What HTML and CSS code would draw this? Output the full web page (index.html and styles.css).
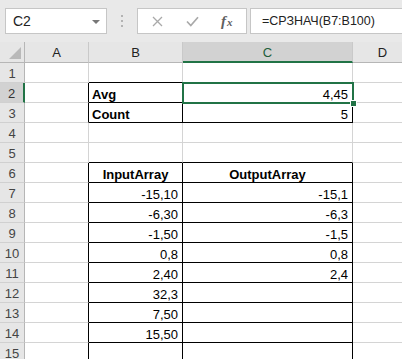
FILE: index.html
```html
<!DOCTYPE html>
<html>
<head>
<meta charset="utf-8">
<link rel="stylesheet" href="styles.css">
</head>
<body>
<div class="app">
  <div class="toolbar">
    <div class="namebox"><span class="nb-text">C2</span><span class="caret"></span></div>
    <div class="dots"><i></i><i></i><i></i></div>
    <div class="fxbox">
      <svg class="ic-x" width="11" height="11" viewBox="0 0 11 11"><path d="M1 1L10 10M10 1L1 10" stroke="#a9a9a9" stroke-width="1.3" fill="none"/></svg>
      <svg class="ic-ok" width="13" height="11" viewBox="0 0 13 11"><path d="M1 5.5L4.8 9.5L12 1.2" stroke="#a9a9a9" stroke-width="1.7" fill="none"/></svg>
      <span class="fx"><span class="fx-f">f</span><span class="fx-x">x</span></span>
    </div>
    <div class="formula">=СРЗНАЧ(B7:B100)</div>
  </div>
  <div class="sheet">
    <div class="c hd corner"><span class="tri"></span></div>
    <div class="c hd col">A</div>
    <div class="c hd col">B</div>
    <div class="c hd col selcol">C</div>
    <div class="c hd col">D</div>

    <div class="c hd rh">1</div><div class="c"></div><div class="c bb"></div><div class="c bb"></div><div class="c"></div>
    <div class="c hd rh selrow">2</div><div class="c br"></div><div class="c br bb b">Avg</div><div class="c br bb num sel">4,45</div><div class="c"></div>
    <div class="c hd rh">3</div><div class="c br"></div><div class="c br bb b">Count</div><div class="c br bb num">5</div><div class="c"></div>
    <div class="c hd rh">4</div><div class="c"></div><div class="c"></div><div class="c"></div><div class="c"></div>
    <div class="c hd rh">5</div><div class="c"></div><div class="c bb"></div><div class="c bb"></div><div class="c"></div>
    <div class="c hd rh">6</div><div class="c br"></div><div class="c br bb b ctr">InputArray</div><div class="c br bb b ctr">OutputArray</div><div class="c"></div>
    <div class="c hd rh">7</div><div class="c br"></div><div class="c br bb num">-15,10</div><div class="c br bb num">-15,1</div><div class="c"></div>
    <div class="c hd rh">8</div><div class="c br"></div><div class="c br bb num">-6,30</div><div class="c br bb num">-6,3</div><div class="c"></div>
    <div class="c hd rh">9</div><div class="c br"></div><div class="c br bb num">-1,50</div><div class="c br bb num">-1,5</div><div class="c"></div>
    <div class="c hd rh">10</div><div class="c br"></div><div class="c br bb num">0,8</div><div class="c br bb num">0,8</div><div class="c"></div>
    <div class="c hd rh">11</div><div class="c br"></div><div class="c br bb num">2,40</div><div class="c br bb num">2,4</div><div class="c"></div>
    <div class="c hd rh">12</div><div class="c br"></div><div class="c br bb num">32,3</div><div class="c br bb num"></div><div class="c"></div>
    <div class="c hd rh">13</div><div class="c br"></div><div class="c br bb num">7,50</div><div class="c br bb num"></div><div class="c"></div>
    <div class="c hd rh">14</div><div class="c br"></div><div class="c br bb num">15,50</div><div class="c br bb num"></div><div class="c"></div>
    <div class="c hd rh">15</div><div class="c br"></div><div class="c br bb num"></div><div class="c br bb num"></div><div class="c"></div>
  </div>
</div>
</body>
</html>
```
FILE: styles.css
```css
html, body {
  margin: 0;
  padding: 0;
  background: #ffffff;
}
.app {
  width: 402px;
  height: 359px;
  overflow: hidden;
  font-family: "Liberation Sans", Arial, sans-serif;
}
.toolbar {
  height: 42px;
  box-sizing: border-box;
  background: #e9e9e9;
  display: flex;
  align-items: flex-start;
  padding-top: 8px;
  padding-left: 5px;
  overflow: hidden;
}
.toolbar > * {
  flex: none;
}
.namebox {
  width: 102px;
  height: 26px;
  box-sizing: border-box;
  border: 1px solid #c6c6c6;
  background: #ffffff;
  display: flex;
  align-items: center;
  justify-content: space-between;
  padding: 0 6px 0 7px;
  font-size: 14px;
  color: #222222;
}
.caret {
  width: 0;
  height: 0;
  border-left: 4px solid transparent;
  border-right: 4px solid transparent;
  border-top: 4px solid #777777;
  margin-top: 1px;
}
.dots {
  margin-left: 14px;
  height: 26px;
  display: flex;
  flex-direction: column;
  justify-content: center;
  gap: 3px;
}
.dots i {
  display: block;
  width: 2px;
  height: 2px;
  background: #b3b3b3;
}
.fxbox {
  margin-left: 14px;
  width: 110px;
  height: 26px;
  box-sizing: border-box;
  border: 1px solid #c6c6c6;
  background: #ffffff;
  display: flex;
  align-items: center;
  padding-left: 14px;
}
.ic-ok {
  margin-left: 23px;
}
.fx {
  margin-left: 22px;
  font-family: "Liberation Serif", "Times New Roman", serif;
  font-style: italic;
  color: #606060;
  display: flex;
  align-items: baseline;
}
.fx-f {
  font-size: 15px;
  font-weight: bold;
}
.fx-x {
  font-size: 11px;
  font-weight: bold;
  margin-left: 1px;
}
.formula {
  margin-left: 3px;
  width: 200px;
  height: 26px;
  box-sizing: border-box;
  border: 1px solid #c6c6c6;
  background: #ffffff;
  display: flex;
  align-items: center;
  padding-left: 11px;
  font-size: 12.5px;
  color: #222222;
}
.sheet {
  display: grid;
  grid-template-columns: 25px 64px 94px 170px 60px;
  grid-template-rows: 21px;
  grid-auto-rows: 20px;
}
.c {
  box-sizing: border-box;
  border-right: 1px solid #d4d4d4;
  border-bottom: 1px solid #d4d4d4;
  display: flex;
  align-items: flex-end;
  padding: 0 3px;
  font-size: 13px;
  line-height: 15px;
  color: #000000;
  white-space: nowrap;
  overflow: visible;
}
.hd {
  background: #e6e6e6;
  color: #444444;
  justify-content: center;
  align-items: center;
  padding: 1px 0 0 0;
  font-size: 13px;
  border-right-color: #c9c9c9;
  border-bottom-color: #c9c9c9;
}
.col {
  border-bottom-color: #b6b6b6;
  color: #222222;
}
.rh {
  border-right-color: #b6b6b6;
  border-bottom-color: #d0d0d0;
}
.corner {
  position: relative;
  border-right-color: #b6b6b6;
  border-bottom-color: #b6b6b6;
}
.tri {
  position: absolute;
  right: 3px;
  bottom: 3px;
  width: 0;
  height: 0;
  border-left: 12px solid transparent;
  border-bottom: 12px solid #b9b9b9;
}
.selcol {
  background: #d2d2d2;
  color: #1e5e3b;
  border-bottom: 2px solid #217346;
}
.selrow {
  background: #d2d2d2;
  color: #333333;
  border-right: 2px solid #217346;
}
.bb {
  border-bottom-color: #000000;
}
.br {
  border-right-color: #000000;
}
.b {
  font-weight: bold;
}
.num {
  justify-content: flex-end;
  padding-right: 4px;
}
.ctr {
  justify-content: center;
}
.sel {
  position: relative;
}
.sel::after {
  content: "";
  position: absolute;
  left: -1px;
  top: -1px;
  right: -2px;
  bottom: -2px;
  border: 2px solid #217346;
}
.sel::before {
  content: "";
  position: absolute;
  right: -4px;
  bottom: -4px;
  width: 5px;
  height: 5px;
  background: #217346;
  outline: 1px solid #ffffff;
  z-index: 2;
}
```
